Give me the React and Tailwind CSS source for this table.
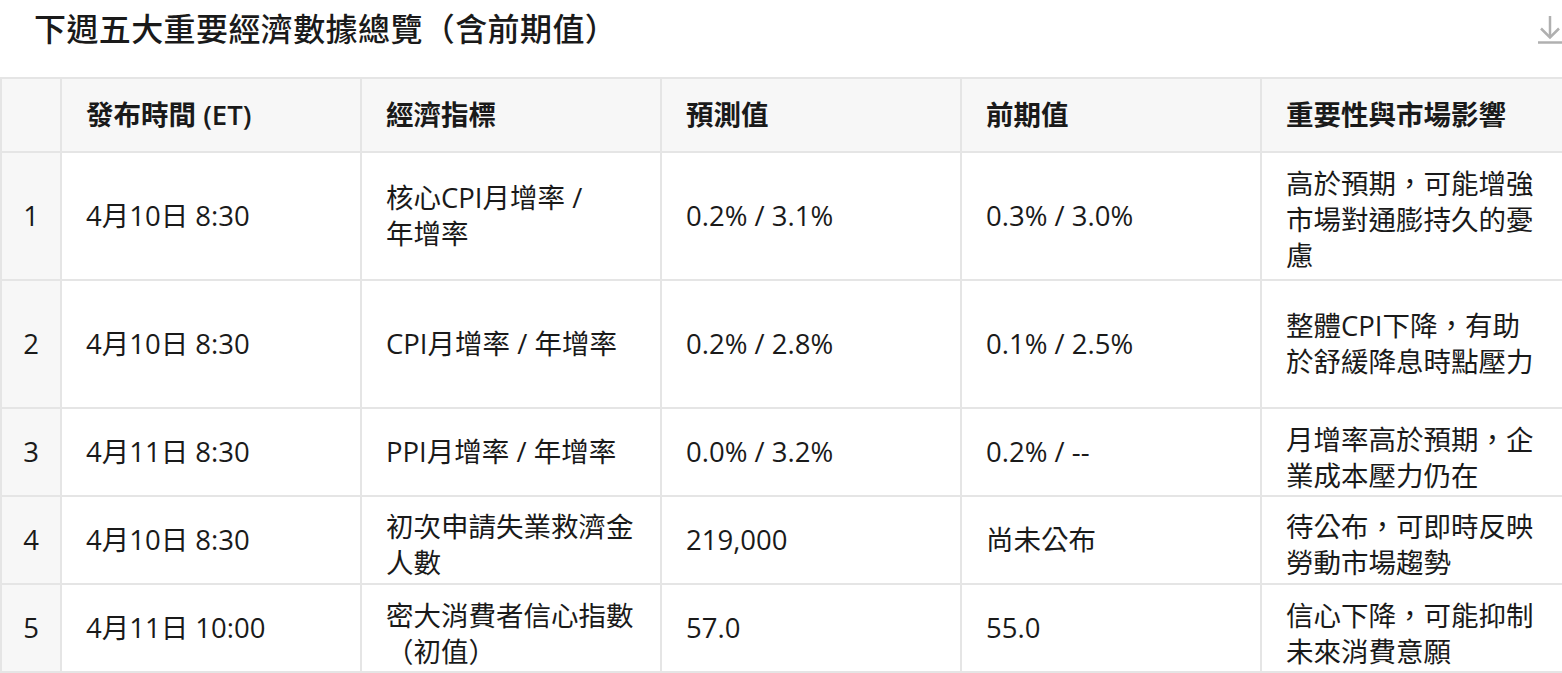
const rows = [
  { n: 1, time: '4月10日 8:30', name: ['核心CPI月增率 /', '年增率'], forecast: '0.2% / 3.1%', prev: '0.3% / 3.0%', note: '高於預期，可能增強市場對通膨持久的憂慮', h: 'h-[128px]', nameCls: '', noteCls: 'pt-[8px]' },
  { n: 2, time: '4月10日 8:30', name: ['CPI月增率 / 年增率'], forecast: '0.2% / 2.8%', prev: '0.1% / 2.5%', note: '整體CPI下降，有助於舒緩降息時點壓力', h: 'h-[128px]', nameCls: '', noteCls: '' },
  { n: 3, time: '4月11日 8:30', name: ['PPI月增率 / 年增率'], forecast: '0.0% / 3.2%', prev: '0.2% / --', note: '月增率高於預期，企業成本壓力仍在', h: 'h-[88px]', nameCls: '', noteCls: 'pt-[12px]' },
  { n: 4, time: '4月10日 8:30', name: ['初次申請失業救濟金', '人數'], forecast: '219,000', prev: '尚未公布', note: '待公布，可即時反映勞動市場趨勢', h: 'h-[88px]', nameCls: 'pt-[10px]', noteCls: 'pt-[10px]' },
  { n: 5, time: '4月11日 10:00', name: ['密大消費者信心指數', '（初值）'], forecast: '57.0', prev: '55.0', note: '信心下降，可能抑制未來消費意願', h: 'h-[88px]', nameCls: 'pt-[12px]', noteCls: 'pt-[12px]' },
];

const headers = ['發布時間 (ET)', '經濟指標', '預測值', '前期值', '重要性與市場影響'];

const DownloadIcon = () => (
  <svg width="24" height="28" viewBox="0 0 24 28" fill="none" stroke="#b0b0b0" strokeWidth="2.5">
    <path d="M12 0v21" />
    <path d="M3 12.5L12 21.5l9-9" />
    <path d="M0 26.5h24" />
  </svg>
);

export default function App() {
  return (
    <div className="w-[1562px] h-[673px] overflow-hidden bg-white text-[#1a1a1a]" style={{ fontFamily: '"Open Sans", "Noto Sans CJK TC", sans-serif' }}>
      <div className="h-[77px] flex items-start justify-between pl-[34px]">
        <h1 className="text-[32px] font-medium leading-none pt-[13px] tracking-[0.4px]">下週五大重要經濟數據總覽（含前期值）</h1>
        <div className="pt-[16px]">
          <DownloadIcon />
        </div>
      </div>
      <table className="table-fixed w-[1562px] border-collapse text-[27.5px] leading-[36px]">
        <colgroup>
          <col className="w-[60px]" />
          <col className="w-[300px]" />
          <col className="w-[300px]" />
          <col className="w-[300px]" />
          <col className="w-[300px]" />
          <col className="w-[302px]" />
        </colgroup>
        <thead>
          <tr className="h-[74px] bg-[#f7f7f7]">
            <th className="border-2 border-[#e5e5e5]"></th>
            {headers.map(h => (
              <th key={h} className="border-2 border-[#e5e5e5] px-6 text-left font-semibold">{h}</th>
            ))}
          </tr>
        </thead>
        <tbody>
          {rows.map(r => (
            <tr key={r.n} className={r.h}>
              <td className="border-2 border-[#e5e5e5] bg-[#f7f7f7] text-center">{r.n}</td>
              <td className="border-2 border-[#e5e5e5] px-6">{r.time}</td>
              <td className={`border-2 border-[#e5e5e5] px-6 ${r.nameCls}`}>
                {r.name.map(l => <div key={l}>{l}</div>)}
              </td>
              <td className="border-2 border-[#e5e5e5] px-6">{r.forecast}</td>
              <td className="border-2 border-[#e5e5e5] px-6">{r.prev}</td>
              <td className={`border-2 border-[#e5e5e5] pl-6 pr-5 ${r.noteCls}`}>{r.note}</td>
            </tr>
          ))}
        </tbody>
      </table>
    </div>
  );
}
